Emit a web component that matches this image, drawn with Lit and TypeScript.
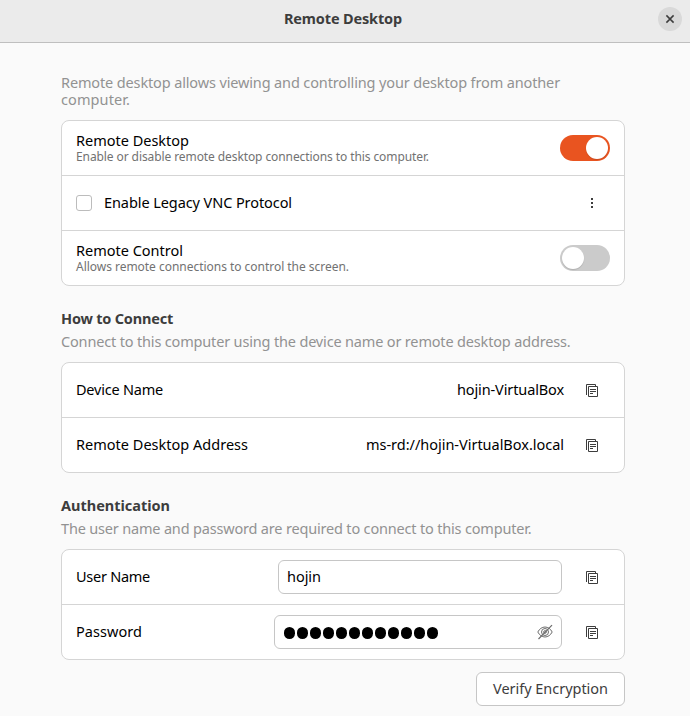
import { LitElement, html, css, nothing } from "lit";
import { customElement, property } from "lit/decorators.js";

/** A line of text whose tracking is adjusted so that it spans a given width. */
@customElement("ui-text")
class UiText extends LitElement {
  @property() text = "";
  @property({ type: Number }) span = 0;

  static styles = css`
    :host { display: block; white-space: pre; }
    .line { display: inline-block; vertical-align: top; }
  `;

  firstUpdated() {
    const line = this.renderRoot.querySelector<HTMLElement>(".line")!;
    const natural = line.getBoundingClientRect().width;
    line.style.letterSpacing = `${(this.span - natural) / this.text.length}px`;
  }

  render() {
    return html`<span class="line">${this.text}</span>`;
  }
}

@customElement("ui-switch")
class UiSwitch extends LitElement {
  @property({ type: Boolean, reflect: true }) on = false;

  static styles = css`
    :host {
      display: flex; box-sizing: border-box; width: 50px; height: 26px; padding: 2px;
      border-radius: 13px; background: #cbcbcb;
    }
    :host([on]) { justify-content: flex-end; background: #e95420; }
    .knob { width: 22px; height: 22px; border-radius: 50%; background: #fff; box-shadow: 0 1px 1px #0002; }
  `;

  render() {
    return html`<span class="knob"></span>`;
  }
}

const txt = (text: string, span: number) => html`<ui-text .text=${text} .span=${span}></ui-text>`;

const copyIcon = html`<svg class="icon" width="16" height="16" viewBox="0 0 16 16" fill="none" stroke="#3d3d3d">
  <path d="M2.5 13V2.5H11.5V4M4.5 4.5H13.5V14.5H4.5ZM6 7.5H12M6 9.5H12M6 11.5H9"/>
</svg>`;

const eyeIcon = html`<svg class="eye" width="16" height="16" viewBox="0 0 16 16" fill="none" stroke="#6e6e6e">
  <path d="M.8 8C2.4 4.9 5 3 8 3s5.600 1.900 7.200 5C13.600 11.100 11 13 8 13S2.400 11.100.8 8Z"/>
  <circle cx="8" cy="8" r="3.500"/><circle cx="8" cy="8" r="1.300"/>
  <path d="M1.500 15 15 1.200" stroke-width="1.200"/>
</svg>`;

@customElement("app-root")
class AppRoot extends LitElement {
  static styles = css`
    :host {
      display: block; box-sizing: border-box; height: 716px; overflow: hidden; background: #fafafa;
      font: 14.5px/17px "Noto Sans", "Open Sans", sans-serif; color: #000;
    }
    header {
      display: grid; grid-template-columns: 1fr auto 1fr; align-items: center; box-sizing: border-box;
      height: 43px; padding: 0 8px 4px 4px; background: #ebebeb; border-bottom: 1px solid #bfbfbf;
    }
    .title { grid-column: 2; padding-bottom: 2px; font-weight: 700; color: #3d3d3d; }
    .close {
      justify-self: end; display: grid; place-items: center; width: 24px; height: 24px;
      border-radius: 50%; background: #d9d9d9;
    }
    main { display: flex; flex-direction: column; width: 564px; margin-left: 61px; padding-top: 31px; }
    .note { color: #929292; display: flex; flex-direction: column; align-items: flex-start; }
    .card {
      box-sizing: border-box; margin-top: 12px; border: 1px solid #d5d5d5; border-radius: 8px;
      background: #fff;
    }
    .row { display: flex; align-items: center; box-sizing: border-box; height: 54px; padding: 0 14px; }
    .row + .row { border-top: 1px solid #d5d5d5; height: 55px; }
    .grow { flex: 1; display: flex; flex-direction: column; align-items: flex-start; }
    .single, .row > ui-text { padding-bottom: 2px; }
    .sub { font-size: 12px; line-height: 15px; color: #727272; }
    .check { box-sizing: border-box; width: 16px; height: 16px; margin-right: 12px; border: 1px solid #bcbcbc; border-radius: 3px; }
    .icon { display: block; margin: 0 10px 0 20px; }
    .section { margin-top: 24px; font-weight: 700; color: #3d3d3d; }
    .section + .note { margin-top: 6px; }
    .field {
      display: flex; align-items: center; justify-content: space-between; box-sizing: border-box;
      width: 284px; height: 34px; padding: 0 8px; border: 1px solid #c6c6c6; border-radius: 6px;
      margin-right: 2px;
    }
    .field > ui-text { padding-bottom: 2px; }
    .secret { width: 288px; }
    .dots { display: flex; gap: 1.500px; padding: 2px 0 0 .5px; }
    .dot { width: 11.500px; height: 11.500px; border-radius: 50%; background: #000; }
    .verify {
      align-self: flex-end; display: grid; place-items: center; box-sizing: border-box; width: 149px;
      height: 34px; margin-top: 12px; padding-bottom: 2px; border: 1px solid #c6c6c6; border-radius: 6px; background: #fff; color: #3d3d3d;
    }
  `;

  private row(label: unknown, trailing: unknown, sub: unknown = nothing) {
    const plain = sub === nothing;
    return html`<div class="row">
      <div class="grow ${plain ? "single" : ""}">${label}${plain ? nothing : html`<div class="sub">${sub}</div>`}</div>
      ${trailing}
    </div>`;
  }

  render() {
    return html`
      <header>
        <div class="title">${txt("Remote Desktop", 118)}</div>
        <div class="close">
          <svg width="10" height="10" viewBox="0 0 10 10" stroke="#3d3d3d" stroke-width="1.500">
            <path d="M1.400 1.400 8.600 8.600M8.600 1.400 1.400 8.600"/>
          </svg>
        </div>
      </header>
      <main>
        <div class="note">
          ${txt("Remote desktop allows viewing and controlling your desktop from another", 499)}
          ${txt("computer.", 69)}
        </div>
        <div class="card">
          ${this.row(txt("Remote Desktop", 113), html`<ui-switch on></ui-switch>`,
            txt("Enable or disable remote desktop connections to this computer.", 353))}
          <div class="row">
            <span class="check"></span>
            <div class="grow single">${txt("Enable Legacy VNC Protocol", 188)}</div>
            <svg class="icon" width="16" height="16" viewBox="0 0 16 16" fill="#3d3d3d">
              <path d="M7 3h2v2H7zM7 7h2v2H7zM7 11h2v2H7z"/>
            </svg>
          </div>
          ${this.row(txt("Remote Control", 107), html`<ui-switch></ui-switch>`,
            txt("Allows remote connections to control the screen.", 273))}
        </div>

        <div class="section">${txt("How to Connect", 112)}</div>
        <div class="note">${txt("Connect to this computer using the device name or remote desktop address.", 509.5)}</div>
        <div class="card">
          ${this.row(txt("Device Name", 87), html`${txt("hojin-VirtualBox", 107)}${copyIcon}`)}
          ${this.row(txt("Remote Desktop Address", 172), html`${txt("ms-rd://hojin-VirtualBox.local", 198)}${copyIcon}`)}
        </div>

        <div class="section">${txt("Authentication", 109)}</div>
        <div class="note">${txt("The user name and password are required to connect to this computer.", 470.5)}</div>
        <div class="card">
          ${this.row(txt("User Name", 74), html`<div class="field">${txt("hojin", 34)}</div>${copyIcon}`)}
          ${this.row(txt("Password", 66), html`<div class="field secret">
            <span class="dots">${Array.from({ length: 12 }, () => html`<span class="dot"></span>`)}</span>${eyeIcon}
          </div>${copyIcon}`)}
        </div>
        <div class="verify">${txt("Verify Encryption", 115)}</div>
      </main>
    `;
  }
}
